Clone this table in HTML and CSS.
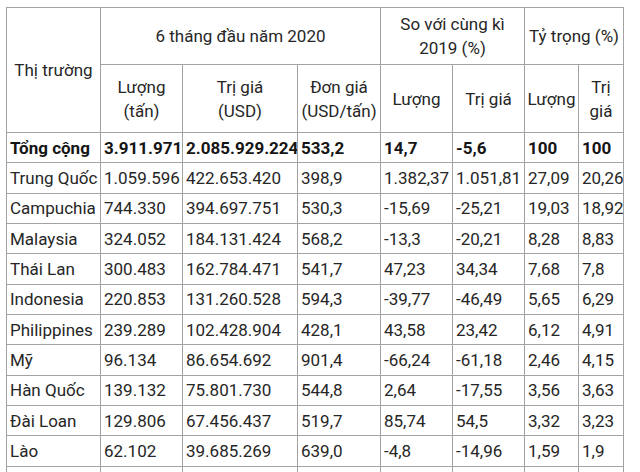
FILE: index.html
```html
<!DOCTYPE html>
<html lang="vi">
<head>
<meta charset="utf-8">
<title>Thị trường xuất khẩu</title>
<link rel="stylesheet" href="styles.css">
</head>
<body>
<table class="data">
  <colgroup>
    <col class="c1"><col class="c2"><col class="c3"><col class="c4">
    <col class="c5"><col class="c6"><col class="c7"><col class="c8">
  </colgroup>
  <thead>
    <tr class="h1">
      <th rowspan="2" class="market-h">Thị trường</th>
      <th colspan="3">6 tháng đầu năm 2020</th>
      <th colspan="2">So với cùng kì 2019 (%)</th>
      <th colspan="2">Tỷ trọng (%)</th>
    </tr>
    <tr class="h2">
      <th>Lượng<br>(tấn)</th>
      <th>Trị giá<br>(USD)</th>
      <th>Đơn giá<br>(USD/tấn)</th>
      <th>Lượng</th>
      <th>Trị giá</th>
      <th>Lượng</th>
      <th>Trị giá</th>
    </tr>
  </thead>
  <tbody>
    <tr class="total"><td>Tổng cộng</td><td>3.911.971</td><td>2.085.929.224</td><td>533,2</td><td>14,7</td><td>-5,6</td><td>100</td><td>100</td></tr>
    <tr><td>Trung Quốc</td><td>1.059.596</td><td>422.653.420</td><td>398,9</td><td>1.382,37</td><td>1.051,81</td><td>27,09</td><td>20,26</td></tr>
    <tr><td>Campuchia</td><td>744.330</td><td>394.697.751</td><td>530,3</td><td>-15,69</td><td>-25,21</td><td>19,03</td><td>18,92</td></tr>
    <tr><td>Malaysia</td><td>324.052</td><td>184.131.424</td><td>568,2</td><td>-13,3</td><td>-20,21</td><td>8,28</td><td>8,83</td></tr>
    <tr><td>Thái Lan</td><td>300.483</td><td>162.784.471</td><td>541,7</td><td>47,23</td><td>34,34</td><td>7,68</td><td>7,8</td></tr>
    <tr><td>Indonesia</td><td>220.853</td><td>131.260.528</td><td>594,3</td><td>-39,77</td><td>-46,49</td><td>5,65</td><td>6,29</td></tr>
    <tr><td>Philippines</td><td>239.289</td><td>102.428.904</td><td>428,1</td><td>43,58</td><td>23,42</td><td>6,12</td><td>4,91</td></tr>
    <tr><td>Mỹ</td><td>96.134</td><td>86.654.692</td><td>901,4</td><td>-66,24</td><td>-61,18</td><td>2,46</td><td>4,15</td></tr>
    <tr><td>Hàn Quốc</td><td>139.132</td><td>75.801.730</td><td>544,8</td><td>2,64</td><td>-17,55</td><td>3,56</td><td>3,63</td></tr>
    <tr><td>Đài Loan</td><td>129.806</td><td>67.456.437</td><td>519,7</td><td>85,74</td><td>54,5</td><td>3,32</td><td>3,23</td></tr>
    <tr><td>Lào</td><td>62.102</td><td>39.685.269</td><td>639,0</td><td>-4,8</td><td>-14,96</td><td>1,59</td><td>1,9</td></tr>
    <tr><td>&nbsp;</td><td>&nbsp;</td><td>&nbsp;</td><td>&nbsp;</td><td>&nbsp;</td><td>&nbsp;</td><td>&nbsp;</td><td>&nbsp;</td></tr>
  </tbody>
</table>
</body>
</html>
```

FILE: styles.css
```css
html, body {
  margin: 0;
  padding: 0;
  background: #ffffff;
  overflow: hidden;
}
body {
  padding: 7px 0 0 6px;
  font-family: Roboto, "Liberation Sans", Arial, sans-serif;
  font-size: 17px;
  color: #262626;
  height: 472px;
  box-sizing: border-box;
}
.data {
  border-collapse: collapse;
  table-layout: fixed;
  width: 617px;
}
.c1 { width: 94px; }
.c2 { width: 82px; }
.c3 { width: 115px; }
.c4 { width: 83px; }
.c5 { width: 72px; }
.c6 { width: 72px; }
.c7 { width: 54px; }
.c8 { width: 45px; }

.data th,
.data td {
  border: 1px solid #a3a3a3;
  line-height: 24px;
  vertical-align: middle;
}
.data th {
  font-weight: normal;
  text-align: center;
  padding: 0 2px;
}
.data td {
  text-align: left;
  padding: 0 2px 0 3px;
  white-space: nowrap;
  overflow: hidden;
}
.h1 { height: 57px; }
.h2 { height: 68px; }
.market-h { padding-bottom: 2px; }
.data tbody tr { height: 30.35px; }
.total td {
  font-weight: bold;
  color: #151515;
}
```
